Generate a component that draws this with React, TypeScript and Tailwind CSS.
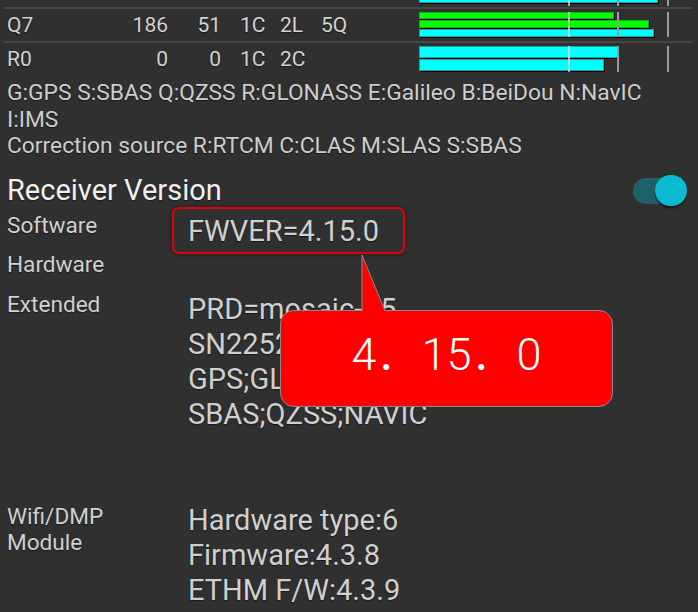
import React from 'react';

type Bar = { w: number; h: number; color: 'g' | 'c' };

const barCls = {
  g: 'bg-[#00ff00] border border-[#23a823] shadow-[1px_1px_0_#000]',
  c: 'bg-[#00ffff] border border-[#2a9c9c] shadow-[1px_1px_0_#000]',
};

function Bars({ bars, gap, tickH }: { bars: Bar[]; gap: number; tickH: number }) {
  return (
    <div className="relative w-[252px]">
      <div className="flex flex-col items-start" style={{ gap }}>
        {bars.map((b, i) => (
          <div key={i} className={barCls[b.color]} style={{ width: b.w, height: b.h }} />
        ))}
      </div>
      <div className="absolute left-[149px] top-0 w-[2px] bg-[#e6e6e6]/70" style={{ height: tickH }} />
      <div className="absolute left-[198px] top-0 w-[2px] bg-[#9a9a9a]" style={{ height: tickH }} />
      <div className="absolute left-[248px] top-0 w-[2px] bg-[#9a9a9a]" style={{ height: tickH }} />
    </div>
  );
}

function SatRow({ id, a, b, codes, bars, gap, tickH }: any) {
  return (
    <div className="flex h-[32px] items-start pl-[7px] text-[21px] leading-[25px] text-[#d2d2d2]">
      <div className="mt-[4px] flex w-[412px]">
        <span className="w-[40px]">{id}</span>
        <span className="w-[121px] text-right">{a}</span>
        <span className="w-[53px] text-right">{b}</span>
        <span className="ml-[19px] w-[40px]">{codes[0]}</span>
        <span className="w-[41px]">{codes[1]}</span>
        <span>{codes[2]}</span>
      </div>
      <div className="mt-[3px]">
        <Bars bars={bars} gap={gap} tickH={tickH} />
      </div>
    </div>
  );
}

const Sep = () => <div className="ml-[4px] h-[2px] w-[688px] bg-[#464646]" />;

const Dot = () => <span className="font-['Noto_Sans_CJK_JP']">．</span>;

export default function App() {
  return (
    <div
      className="relative h-[612px] w-[698px] overflow-hidden bg-[#303030] text-[#d0d0d0] [text-shadow:0_1px_1px_rgba(0,0,0,0.5)]"
      style={{ fontFamily: 'Roboto, "Noto Sans", sans-serif' }}
    >
      {/* tail of the previous satellite row */}
      <div className="flex h-[7px] items-end overflow-hidden pl-[419px]">
        <div className="relative mb-[4px] w-[252px]">
          <div className={barCls.c + ' h-[7px] w-[239px]'} />
          <div className="absolute left-[149px] top-0 h-[10px] w-[2px] bg-[#e6e6e6]/70" />
          <div className="absolute left-[198px] top-0 h-[10px] w-[2px] bg-[#9a9a9a]" />
          <div className="absolute left-[248px] top-0 h-[10px] w-[2px] bg-[#9a9a9a]" />
        </div>
      </div>
      <Sep />
      <SatRow
        id="Q7"
        a="186"
        b="51"
        codes={['1C', '2L', '5Q']}
        gap={1}
        tickH={25}
        bars={[
          { w: 195, h: 7, color: 'g' },
          { w: 230, h: 8, color: 'g' },
          { w: 235, h: 8, color: 'c' },
        ]}
      />
      <Sep />
      <SatRow
        id="R0"
        a="0"
        b="0"
        codes={['1C', '2C', '']}
        gap={1}
        tickH={26}
        bars={[
          { w: 199, h: 12, color: 'c' },
          { w: 185, h: 12, color: 'c' },
        ]}
      />

      <div className="mt-[5px] pl-[7px] text-[22.8px] leading-[26.5px] text-[#cdcdcd]">
        <p>G:GPS S:SBAS Q:QZSS R:GLONASS E:Galileo B:BeiDou N:NavIC</p>
        <p>I:IMS</p>
        <p>Correction source R:RTCM C:CLAS M:SLAS S:SBAS</p>
      </div>

      <div className="mt-[15px] flex items-center justify-between pl-[7px] pr-[11px]">
        <h2 className="text-[29px] leading-[30px] text-[#f0f0f0]">Receiver Version</h2>
        <div className="relative h-[31px] w-[54px]">
          <div className="absolute left-0 top-[3px] h-[26px] w-[44px] rounded-full bg-[#1f6168]" />
          <div className="absolute right-0 top-0 h-[31px] w-[32px] rounded-full bg-[#09bad0] shadow-[0_2px_2px_rgba(0,0,0,0.6)]" />
        </div>
      </div>

      <div className="mt-[1px] flex flex-col text-[22.6px] leading-[26px]">
        <div className="flex items-start">
          <span className="mt-[6px] w-[172px] pl-[7px]">Software</span>
          <div className="rounded-[7px] border-2 border-[#e3000b] pb-[3px] pl-[14px] pr-[24px] pt-[5px] text-[29px] leading-[35px] shadow-[0_0_4px_rgba(0,0,0,0.5)]">
            FWVER=4.15.0
          </div>
        </div>
        <div className="mt-[-2px] flex items-start">
          <span className="w-[172px] pl-[7px]">Hardware</span>
        </div>
        <div className="mt-[14px] flex items-start">
          <span className="w-[188px] pl-[7px]">Extended</span>
          <div className="text-[29px] leading-[35px]">
            <p>PRD=mosaic-X5</p>
            <p>SN22520084</p>
            <p>GPS;GLONASS;GALILEO;BEIDOU;</p>
            <p>SBAS;QZSS;NAVIC</p>
          </div>
        </div>
        <div className="mt-[71px] flex items-start">
          <span className="mt-[1px] w-[188px] pl-[7px]">
            Wifi/DMP
            <br />
            Module
          </span>
          <div className="text-[29px] leading-[35px]">
            <p>Hardware type:6</p>
            <p>Firmware:4.3.8</p>
            <p>ETHM F/W:4.3.9</p>
            <p>mac:1D:BA:31:31:3E:FD:31</p>
          </div>
        </div>
      </div>

      {/* callout annotation */}
      <div className="absolute left-[280px] top-[310px] flex h-[97px] w-[333px] items-center justify-center rounded-[14px] border border-[#8a8a8a] bg-[#ff0000]">
        <span className="mt-[-12px] text-[45px] font-light leading-none text-white [text-shadow:none]">
          4<Dot />15<Dot />0
        </span>
      </div>
      <svg className="absolute left-[360px] top-[254px]" width="28" height="58" viewBox="0 0 28 58">
        <polygon points="2,1 2,57 25,57" fill="#ff0000" />
        <polyline points="2,57 2,1 25,57" fill="none" stroke="#8a8a8a" strokeWidth="1" />
      </svg>
    </div>
  );
}
